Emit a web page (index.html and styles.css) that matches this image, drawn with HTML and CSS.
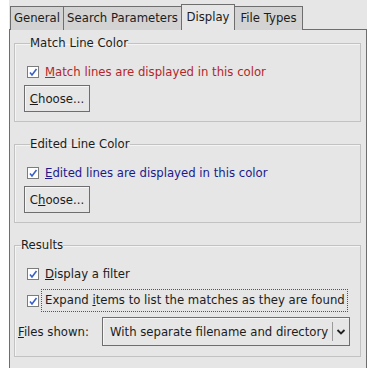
FILE: index.html
```html
<!DOCTYPE html>
<html>
<head>
<meta charset="utf-8">
<link rel="stylesheet" href="styles.css">
</head>
<body>
<div class="notebook">
  <div class="tabs">
    <div class="tab first">General</div>
    <div class="tab wide">Search Parameters</div>
    <div class="tab active">Display</div>
    <div class="tab last">File Types</div>
  </div>
  <div class="pane">
    <fieldset class="group g1">
      <legend>Match Line Color</legend>
      <label class="check red"><span class="box"><svg viewBox="0 0 12 12" width="12" height="12"><path d="M3 6.5 L5 9 L9.5 3" fill="none" stroke="#3a5fc8" stroke-width="1.6"/></svg></span><span><u>M</u>atch lines are displayed in this color</span></label>
      <div class="btnrow"><button class="btn"><u>C</u>hoose...</button></div>
    </fieldset>
    <fieldset class="group g2">
      <legend>Edited Line Color</legend>
      <label class="check blue"><span class="box"><svg viewBox="0 0 12 12" width="12" height="12"><path d="M3 6.5 L5 9 L9.5 3" fill="none" stroke="#3a5fc8" stroke-width="1.6"/></svg></span><span><u>E</u>dited lines are displayed in this color</span></label>
      <div class="btnrow"><button class="btn">C<u>h</u>oose...</button></div>
    </fieldset>
    <fieldset class="group g3">
      <legend>Results</legend>
      <label class="check"><span class="box"><svg viewBox="0 0 12 12" width="12" height="12"><path d="M3 6.5 L5 9 L9.5 3" fill="none" stroke="#3a5fc8" stroke-width="1.6"/></svg></span><span><u>D</u>isplay a filter</span></label>
      <label class="check second"><span class="box"><svg viewBox="0 0 12 12" width="12" height="12"><path d="M3 6.5 L5 9 L9.5 3" fill="none" stroke="#3a5fc8" stroke-width="1.6"/></svg></span><span class="focus">Expand <u>i</u>tems to list the matches as they are found</span></label>
      <div class="filesrow">
        <span class="flabel"><u>F</u>iles shown:</span>
        <div class="combo"><span class="ctext">With separate filename and directory</span><span class="csep"></span><span class="carrow"><svg viewBox="0 0 10 8" width="10" height="8"><path d="M1.5 2 L5 5.5 L8.5 2" fill="none" stroke="#222" stroke-width="1.8"/></svg></span></div>
      </div>
    </fieldset>
  </div>
</div>
</body>
</html>
```

FILE: styles.css
```css
html, body {
  margin: 0;
  padding: 0;
  background: #ffffff;
  height: 100%;
  overflow: hidden;
}
body {
  font-family: "DejaVu Sans", sans-serif;
  font-size: 11.7px;
  color: #1c1c1c;
}
.notebook {
  margin-left: 9px;
  width: 358px;
  height: 368px;
  background: #e6e6e6;
  display: flex;
  flex-direction: column;
  padding-top: 4px;
  box-sizing: border-box;
}
.tabs {
  display: flex;
  align-items: flex-end;
  height: 26px;
  padding-left: 1px;
  position: relative;
  z-index: 1;
  margin-bottom: -1px;
}
.tab {
  height: 24px;
  line-height: 23px;
  padding: 0;
  text-align: center;
  white-space: nowrap;
  background: #d3d3d3;
  border: 1px solid #6e6e6e;
  border-bottom: none;
  border-left: none;
  box-sizing: border-box;
}
.tab.first {
  width: 54px;
  border-left: 1px solid #6e6e6e;
}
.tab.wide { width: 118px; }
.tab.active {
  width: 54px;
  height: 26px;
  background: #e6e6e6;
  border-left: 1px solid #6e6e6e;
  margin-left: -1px;
  line-height: 25px;
}
.tab.last { width: 68px; }
.pane {
  flex: 1;
  border: 1px solid #6e6e6e;
  border-bottom: none;
  padding: 6px 5px 0 4px;
  background: #e6e6e6;
}
.group {
  margin: 0;
  border: 1px solid #c2c2c2;
  padding: 0 0 0 12px;
  box-shadow: inset 1px 1px 0 #f4f4f4;
}
.group legend {
  padding: 0;
  margin-left: 3px;
  line-height: 14px;
  color: #1c1c1c;
}
.g1 { padding-top: 12px; padding-bottom: 9px; }
.g2 { margin-top: 15px; padding-top: 12px; padding-bottom: 9px; }
.g3 { margin-top: 15px; padding-top: 11px; padding-bottom: 10px; padding-left: 3px; }
.check {
  display: flex;
  align-items: center;
  height: 20px;
  gap: 6px;
}
.g3 .check { padding-left: 9px; height: 21px; }
.g3 .check.second { margin-top: 6px; gap: 3px; }
.box {
  width: 12px;
  height: 12px;
  box-sizing: border-box;
  border: 1px solid #7c7c7c;
  background: #ffffff;
  display: flex;
  align-items: center;
  justify-content: center;
}
.box svg { display: block; flex: none; }
.red { color: #b3262a; }
.blue { color: #1b1b8c; }
.focus {
  outline: 1px dotted #555;
  outline-offset: 0;
  padding: 3px 2px 4px 3px;
}
.btnrow { margin-top: 3px; display: flex; margin-left: -3px; }
.btn {
  font: inherit;
  color: #1c1c1c;
  height: 27px;
  padding: 0 4px;
  width: 66px;
  background: #e6e6e6;
  border: 1px solid #6e6e6e;
  box-shadow: inset 1px 1px 0 #f6f6f6;
}
.filesrow {
  display: flex;
  align-items: center;
  margin-top: 6px;
  gap: 4px;
}
.flabel { width: 80px; }
.combo {
  display: flex;
  align-items: center;
  height: 29px;
  width: 248px;
  box-sizing: border-box;
  border: 1px solid #6e6e6e;
  background: #e6e6e6;
  box-shadow: inset 1px 1px 0 #f6f6f6;
}
.ctext { flex: 1; padding-left: 7px; white-space: nowrap; }
.csep { width: 1px; height: 19px; background: #9a9a9a; }
.carrow { width: 16px; display: flex; justify-content: center; }
.carrow svg { display: block; }
```
